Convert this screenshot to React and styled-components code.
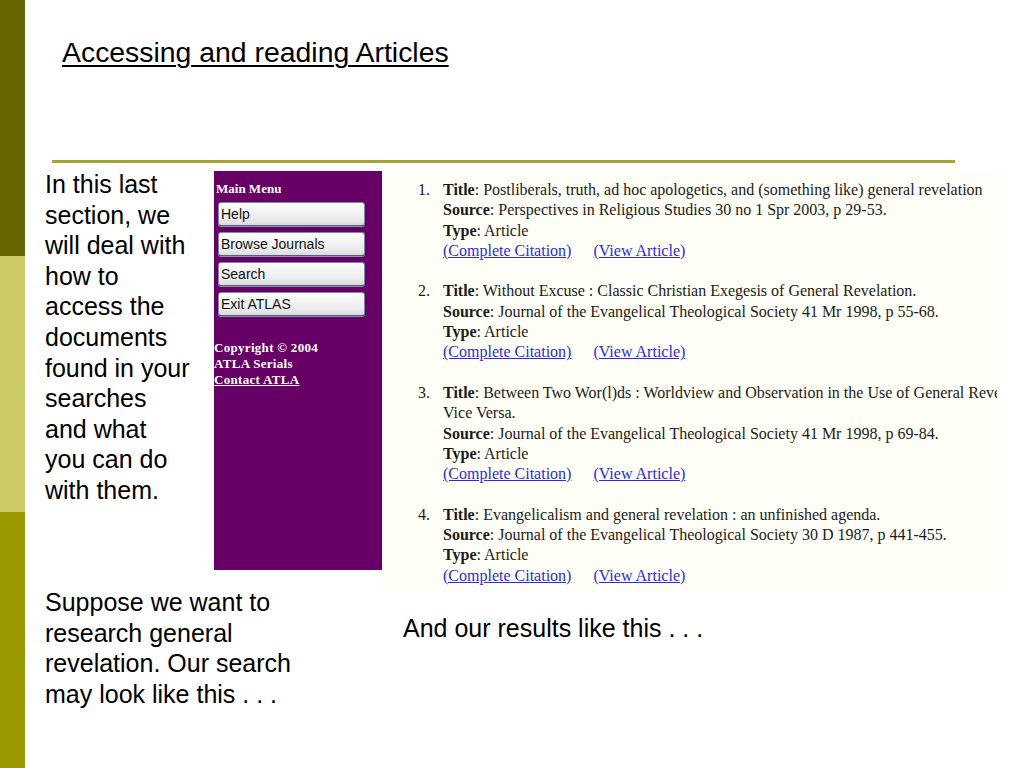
import styled, { createGlobalStyle } from "styled-components";

const Global = createGlobalStyle`
  html, body {
    margin: 0;
    padding: 0;
    background: #ffffff;
  }
  body {
    width: 1024px;
    height: 768px;
    overflow: hidden;
    font-family: "Liberation Sans", Arial, sans-serif;
    color: #000;
  }
`;

const Slide = styled.div`
  display: flex;
  width: 1024px;
  height: 768px;
`;

const Stripe = styled.div`
  width: 25px;
  flex: none;
  display: flex;
  flex-direction: column;
`;

const StripeBlock = styled.div`
  height: 256px;
  background: ${(p) => p.$color};
`;

const Main = styled.div`
  flex: 1;
  padding-top: 36px;
  display: flex;
  flex-direction: column;
`;

const Title = styled.h1`
  margin: 0 0 0 37px;
  font-size: 28.4px;
  line-height: 32px;
  font-weight: normal;
  text-decoration: underline;
  text-underline-offset: 3px;
  text-decoration-thickness: 2px;
`;

const Rule = styled.div`
  margin: 92px 0 0 27px;
  width: 903px;
  height: 3px;
  background: #a3a33a;
`;

const ContentRow = styled.div`
  margin-top: 8px;
  display: flex;
  align-items: flex-start;
  height: 399px;
`;

const BodyText = styled.p`
  margin: 0;
  font-size: 25px;
  line-height: 30.6px;
  color: #000;
`;

const IntroText = styled(BodyText)`
  width: 147px;
  margin: -2px 22px 0 20px;
  flex: none;
`;

const MenuPanel = styled.div`
  width: 168px;
  height: 399px;
  flex: none;
  background: #660066;
  display: flex;
  flex-direction: column;
  font-family: "Liberation Serif", "Times New Roman", serif;
  color: #fff;
`;

const MenuHeading = styled.div`
  margin: 10px 0 0 2px;
  font-size: 13px;
  font-weight: bold;
  line-height: 16px;
`;

const MenuButtons = styled.div`
  margin: 5px 0 0 4px;
  display: flex;
  flex-direction: column;
  gap: 6px;
`;

const MenuButton = styled.button`
  width: 147px;
  height: 24px;
  padding: 0 0 0 2px;
  text-align: left;
  font-family: "Liberation Sans", Arial, sans-serif;
  font-size: 14px;
  color: #111;
  background: linear-gradient(#fdfdfd, #ececec 70%, #dcdcdc);
  border: 1px solid #7b89a6;
  border-bottom-color: #4f5f80;
  border-radius: 3px;
  box-shadow: 0 1px 0 #8896b0;
`;

const Copyright = styled.div`
  margin-top: 24px;
  font-size: 13px;
  font-weight: bold;
  line-height: 16px;
  letter-spacing: 0.3px;

  a {
    color: #fff;
    text-decoration: underline;
  }
`;

const ResultsPanel = styled.div`
  flex: none;
  width: 619px;
  background: #fffff7;
  overflow: hidden;
  padding: 9px 0 4px;
  font-family: "Liberation Serif", "Times New Roman", serif;
  font-size: 16px;
  line-height: 20.3px;
  color: #1a1a1a;
`;

const ResultList = styled.ol`
  margin: 0;
  padding: 0;
  list-style: none;
  display: flex;
  flex-direction: column;
  gap: 20.3px;
`;

const ResultItem = styled.li`
  display: grid;
  grid-template-columns: 61px 1fr;
`;

const Num = styled.span`
  padding-left: 36px;
`;

const Lines = styled.div`
  display: flex;
  flex-direction: column;
  min-width: 0;
`;

const Line = styled.div`
  white-space: nowrap;
  overflow: hidden;
  width: 554px;

  b {
    font-weight: bold;
  }
`;

const Links = styled.div`
  display: flex;
  gap: 22px;

  a {
    color: #2b2bdd;
    text-decoration: underline;
  }
`;

const BottomRow = styled.div`
  display: flex;
  margin-top: 17px;
`;

const SupposeText = styled(BodyText)`
  width: 300px;
  margin-left: 20px;
  flex: none;
`;

const ResultsCaption = styled(BodyText)`
  margin: 26px 0 0 58px;
`;

const results = [
  {
    title: ["Postliberals, truth, ad hoc apologetics, and (something like) general revelation"],
    source: "Perspectives in Religious Studies 30 no 1 Spr 2003, p 29-53.",
  },
  {
    title: ["Without Excuse : Classic Christian Exegesis of General Revelation."],
    source: "Journal of the Evangelical Theological Society 41 Mr 1998, p 55-68.",
  },
  {
    title: [
      "Between Two Wor(l)ds : Worldview and Observation in the Use of General Revelation and",
      "Vice Versa.",
    ],
    source: "Journal of the Evangelical Theological Society 41 Mr 1998, p 69-84.",
  },
  {
    title: ["Evangelicalism and general revelation : an unfinished agenda."],
    source: "Journal of the Evangelical Theological Society 30 D 1987, p 441-455.",
  },
];

const menuItems = ["Help", "Browse Journals", "Search", "Exit ATLAS"];

export default function App() {
  return (
    <>
      <Global />
      <Slide>
        <Stripe>
          <StripeBlock $color="#666600" />
          <StripeBlock $color="#cccc66" />
          <StripeBlock $color="#999900" />
        </Stripe>
        <Main>
          <Title>Accessing and reading Articles</Title>
          <Rule />
          <ContentRow>
            <IntroText>
              In this last section, we will deal with how to access the documents found in your
              searches and what you can do with them.
            </IntroText>
            <MenuPanel>
              <MenuHeading>Main Menu</MenuHeading>
              <MenuButtons>
                {menuItems.map((m) => (
                  <MenuButton key={m}>{m}</MenuButton>
                ))}
              </MenuButtons>
              <Copyright>
                Copyright © 2004
                <br />
                ATLA Serials
                <br />
                <a href="#contact">Contact ATLA</a>
              </Copyright>
            </MenuPanel>
            <ResultsPanel>
              <ResultList>
                {results.map((r, i) => (
                  <ResultItem key={i}>
                    <Num>{i + 1}.</Num>
                    <Lines>
                      <Line>
                        <b>Title</b>: {r.title[0]}
                      </Line>
                      {r.title[1] && <Line>{r.title[1]}</Line>}
                      <Line>
                        <b>Source</b>: {r.source}
                      </Line>
                      <Line>
                        <b>Type</b>: Article
                      </Line>
                      <Links>
                        <a href="#citation">(Complete Citation)</a>
                        <a href="#article">(View Article)</a>
                      </Links>
                    </Lines>
                  </ResultItem>
                ))}
              </ResultList>
            </ResultsPanel>
          </ContentRow>
          <BottomRow>
            <SupposeText>
              Suppose we want to research general revelation. Our search may look like this . . .
            </SupposeText>
            <ResultsCaption>And our results like this . . .</ResultsCaption>
          </BottomRow>
        </Main>
      </Slide>
    </>
  );
}
